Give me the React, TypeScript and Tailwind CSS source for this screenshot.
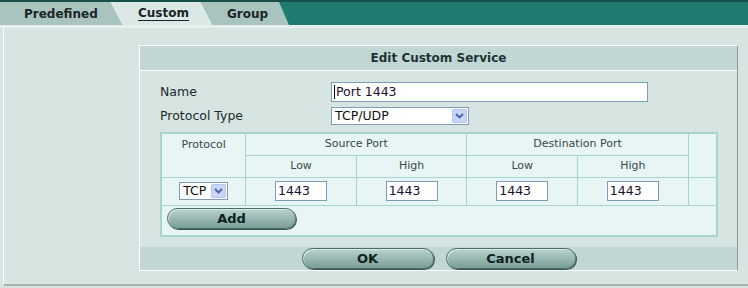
const TAB_FONT = "font-['DejaVu_Sans',Verdana,sans-serif]";

function Chevron() {
  return (
    <span className="flex h-[14px] w-[15px] items-center justify-center rounded-[2px] border border-[#b6c4ee] bg-[#c9d6f8]">
      <svg width="9" height="6" viewBox="0 0 9 6">
        <path d="M1 1 L4.5 4.5 L8 1" fill="none" stroke="#4a5fa8" strokeWidth="1.8" />
      </svg>
    </span>
  );
}

function FakeSelect({ value, width }: { value: string; width: string }) {
  return (
    <div className={`${width} flex h-[18px] items-center justify-between border border-[#7f9db9] bg-white pl-[3px] pr-[1px] text-[12.5px] text-[#111]`}>
      <span>{value}</span>
      <Chevron />
    </div>
  );
}

function PillButton({ label, width }: { label: string; width: string }) {
  return (
    <button
      type="button"
      className={`${width} h-[21px] rounded-full border border-[#4d6b66] bg-gradient-to-b from-[#b9d3ce] via-[#98b9b2] to-[#7a9f98] text-[13px] font-bold leading-none text-[#0f1f1f] shadow-[1px_1px_0_#3a5450,inset_1px_1px_0_#d8e9e6]`}
    >
      {label}
    </button>
  );
}

function PortInput() {
  return (
    <div className="mx-auto flex h-[20px] w-[52px] items-center border border-[#7f9db9] bg-white pl-[2px] text-[12.5px] text-[#1a1030]">
      1443
    </div>
  );
}

export default function App() {
  const cell = "border border-[#a6d5cb] font-normal";

  return (
    <div className={`${TAB_FONT} h-[288px] w-[748px] overflow-hidden bg-[#d6e4e2] text-[#1d2b2b]`}>
      {/* tab strip */}
      <div className="flex h-[25px] items-end border-t-2 border-[#15504a] bg-[#1f7b70]">
        <div className="flex h-[23px] w-[122px] items-center bg-[#a9c3bf] pl-[24px] text-[12px] font-bold text-[#1a2626] [clip-path:polygon(0_0,110px_0,122px_100%,0_100%)]">
          Predefined
        </div>
        <div className="-ml-[12px] flex h-[23px] w-[103px] items-center justify-center bg-[#dce8e6] pl-[4px] text-[12px] font-bold text-[#1a2626] [clip-path:polygon(0_0,91px_0,103px_100%,12px_100%)]">
          <span className="border-b border-[#1a2626] leading-[13px]">Custom</span>
        </div>
        <div className="-ml-[12px] flex h-[23px] w-[88px] items-center bg-[#a9c3bf] pl-[26px] text-[12px] font-bold text-[#1a2626] [clip-path:polygon(0_0,78px_0,88px_100%,12px_100%)]">
          Group
        </div>
      </div>
      <div className="h-[3px] bg-[#e6efed]" />

      {/* content */}
      <div className="ml-[3px] h-[258px] border-b-2 border-l border-b-[#a5b3b1] border-l-white bg-[#d6e4e2] pt-[17px]">
        <div className="ml-[135px] w-[599px] border-b border-l border-r border-t border-b-white border-l-white border-r-[#8d9c9a] border-t-white">
          <div className="flex h-[25px] items-center justify-center border-b border-white bg-[#c2d6d4] text-[12px] font-bold text-[#1a3434]">
            Edit Custom Service
          </div>

          <div className="px-[20px] pt-[11px]">
            <div className="flex h-[20px] items-center text-[12.5px]">
              <span className="w-[171px]">Name</span>
              <div className="flex h-[20px] w-[317px] items-center border border-[#7f9db9] bg-white pl-[2px] text-[12.5px] text-[#1a1030]">
                <span className="mr-px h-[14px] w-px bg-black" />
                Port 1443
              </div>
            </div>
            <div className="mt-[5px] flex h-[18px] items-center text-[12.5px]">
              <span className="w-[171px]">Protocol Type</span>
              <FakeSelect value="TCP/UDP" width="w-[138px]" />
            </div>

            <table className="mt-[7px] w-[558px] border-collapse border-2 border-[#a6d5cb] bg-[#e7f5f4] text-[11px] text-[#3a4848]">
              <colgroup>
                <col className="w-[85px]" />
                <col className="w-[111px]" />
                <col className="w-[111px]" />
                <col className="w-[111px]" />
                <col className="w-[111px]" />
                <col className="w-[29px]" />
              </colgroup>
              <thead>
                <tr className="h-[22px]">
                  <th rowSpan={2} className={`${cell} pt-[3px] align-top`}>Protocol</th>
                  <th colSpan={2} className={cell}>Source Port</th>
                  <th colSpan={2} className={cell}>Destination Port</th>
                  <th rowSpan={2} className={cell} />
                </tr>
                <tr className="h-[22px]">
                  <th className={cell}>Low</th>
                  <th className={cell}>High</th>
                  <th className={cell}>Low</th>
                  <th className={cell}>High</th>
                </tr>
              </thead>
              <tbody>
                <tr className="h-[28px]">
                  <td className={cell}>
                    <div className="flex justify-center">
                      <FakeSelect value="TCP" width="w-[49px]" />
                    </div>
                  </td>
                  <td className={cell}><PortInput /></td>
                  <td className={cell}><PortInput /></td>
                  <td className={cell}><PortInput /></td>
                  <td className={cell}><PortInput /></td>
                  <td className={cell} />
                </tr>
                <tr className="h-[31px]">
                  <td colSpan={6} className="px-[5px] pb-[3px] align-middle">
                    <PillButton label="Add" width="w-[129px]" />
                  </td>
                </tr>
              </tbody>
            </table>
          </div>

          <div className="mt-[10px] flex h-[23px] items-center justify-center gap-[12px] bg-[#c2d6d4]">
            <PillButton label="OK" width="w-[132px]" />
            <PillButton label="Cancel" width="w-[130px]" />
          </div>
        </div>
      </div>
    </div>
  );
}
